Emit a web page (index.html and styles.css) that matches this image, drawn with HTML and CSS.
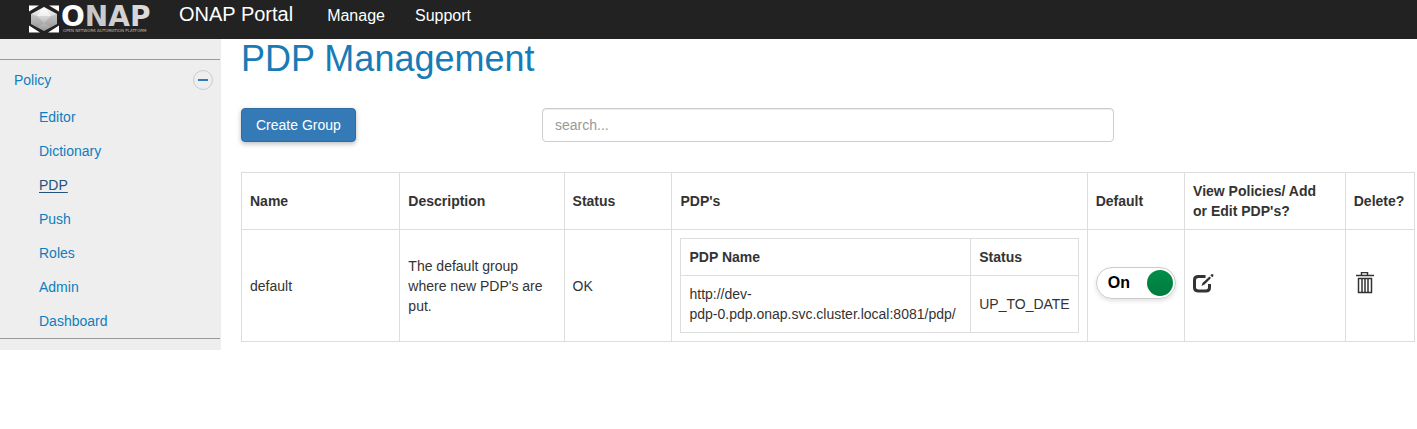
FILE: index.html
```html
<!DOCTYPE html>
<html lang="en">
<head>
<meta charset="utf-8">
<title>ONAP Portal</title>
<link rel="stylesheet" href="styles.css">
</head>
<body>
<header class="topbar">
  <svg class="logo" width="128" height="30" viewBox="0 0 128 30" role="img" aria-label="ONAP Open Network Automation Platform">
    <defs>
      <linearGradient id="hex" x1="0" y1="0" x2="0" y2="1">
        <stop offset="0" stop-color="#fff"/>
        <stop offset="1" stop-color="#999"/>
      </linearGradient>
      <linearGradient id="word" x1="0" y1="0" x2="1" y2="0">
        <stop offset="0" stop-color="#bbb"/>
        <stop offset="1" stop-color="#ddd"/>
      </linearGradient>
    </defs>
    <path fill="#fff" d="M1 1.500h10L1 7.500zM31 1.500v6l-10-6zM1 28.500v-7l11 7zM31 28.500v-7l-11 7z"/>
    <path fill="url(#hex)" d="M16 3L29 10v10l-13 7-13-7V10z"/>
    <path fill="#fff" opacity=".6" d="M16 3L23 12H9z"/>
    <path fill="#888" opacity=".3" d="M3 10l6 2-6 8zM29 10l-6 2 6 8zM9 12l7 7-7 4.500-6-3.500zM23 12l-7 7 7 4.500 6-3.500z"/>
    <text class="logo-word" x="33" y="22"><tspan fill="#fff">O</tspan><tspan fill="url(#word)">NAP</tspan></text>
    <text class="logo-sub" x="35" y="28">OPEN NETWORK AUTOMATION PLATFORM</text>
  </svg>
  <a class="brand" href="#">ONAP Portal</a>
  <nav class="topnav" aria-label="Main">
    <a href="#">Manage</a>
    <a href="#">Support</a>
  </nav>
</header>
<div class="layout">
  <aside class="sidebar">
    <nav class="menu" aria-label="Policy">
      <div class="menu-head">
        <a href="#">Policy</a>
        <button class="collapse" type="button" aria-label="Collapse Policy"></button>
      </div>
      <ul class="menu-list">
        <li><a href="#">Editor</a></li>
        <li><a href="#">Dictionary</a></li>
        <li><a class="active" href="#" aria-current="page">PDP</a></li>
        <li><a href="#">Push</a></li>
        <li><a href="#">Roles</a></li>
        <li><a href="#">Admin</a></li>
        <li><a href="#">Dashboard</a></li>
      </ul>
    </nav>
  </aside>
  <main class="content">
    <h1>PDP Management</h1>
    <div class="toolbar">
      <button class="create" type="button">Create Group</button>
      <input class="search" type="text" placeholder="search..." aria-label="Search">
    </div>
    <table class="grid groups">
      <colgroup>
        <col class="c-name"><col class="c-desc"><col class="c-status"><col class="c-pdps"><col class="c-default"><col class="c-view"><col class="c-delete">
      </colgroup>
      <thead>
        <tr><th>Name</th><th>Description</th><th>Status</th><th>PDP's</th><th>Default</th><th>View Policies/ Add<br>or Edit PDP's?</th><th>Delete?</th></tr>
      </thead>
      <tbody>
        <tr>
          <td>default</td>
          <td>The default group where new PDP's are put.</td>
          <td>OK</td>
          <td>
            <table class="grid">
              <thead><tr><th>PDP Name</th><th>Status</th></tr></thead>
              <tbody><tr><td>http://dev-<wbr><span class="host">pdp-0.pdp.onap.svc.cluster.local:8081/pdp/</span></td><td>UP_TO_DATE</td></tr></tbody>
            </table>
          </td>
          <td><label class="toggle"><span>On</span><input type="checkbox" checked></label></td>
          <td>
            <button class="icon" type="button" aria-label="Edit">
              <svg width="22" height="22" viewBox="0 0 22 22">
                <path d="M12.500 4.500H5.500Q1.500 4.500 1.500 8v7.500Q1.500 19 5.500 19H13q3.500 0 3.500-3.500V12" fill="none" stroke="#333" stroke-width="3"/>
                <path d="M8.500 14l1-3L16.500 4.500l1.500 1.500-6.500 6.500zM17.300 3.200L18.300 2.200h2v2L19.300 5.200z" fill="#333"/>
              </svg>
            </button>
          </td>
          <td>
            <button class="icon" type="button" aria-label="Delete">
              <svg width="22" height="22" viewBox="0 0 22 22">
                <path d="M2 3.500h18M7.500 3V.5h6V3M4 6.500h14M4.500 6v14.500h13V6M8 6.500v14M11 6.500v14M14 6.500v14" fill="none" stroke="#333" stroke-width="1.500"/>
              </svg>
            </button>
          </td>
        </tr>
      </tbody>
    </table>
  </main>
</div>
</body>
</html>
```
FILE: styles.css
```css
* { box-sizing: border-box; }
body {
  margin: 0;
  background: #fff;
  color: #333;
  font: 14px/20px "Liberation Sans", Arial, sans-serif;
}
a { color: #0e7dbd; text-decoration: none; }
button, input { font: inherit; margin: 0; }

.topbar {
  display: flex;
  align-items: flex-start;
  height: 39px;
  padding: 4px 28px;
  background: #222;
}
.topbar a { color: #fff; }
.logo { flex: none; margin-right: 23px; overflow: visible; }
.logo-word { font: bold 28px "DejaVu Sans", sans-serif; }
.logo-sub { font: 4px "DejaVu Sans", sans-serif; fill: #bbb; }
.brand { font-size: 20px; white-space: nowrap; }
.topnav { display: flex; gap: 30px; margin-left: 34px; padding-top: 2px; font-size: 16px; }

.layout { display: flex; align-items: flex-start; }
.sidebar {
  flex: 0 0 221px;
  padding: 20px 1px 11px 0;
  background: #eee;
}
.menu { border-top: 1px solid #999; border-bottom: 1px solid #999; }
.menu-head {
  display: flex;
  align-items: center;
  justify-content: space-between;
  height: 40px;
  padding: 0 7px 0 14px;
}
.collapse {
  display: grid;
  place-items: center;
  width: 20px;
  height: 20px;
  padding: 0;
  border: 1px solid #ccc;
  border-radius: 50%;
  background: none;
}
.collapse::before { content: ""; width: 10px; height: 2px; background: #337ab7; }
.menu-list { margin: 0; padding: 0 0 0 39px; list-style: none; }
.menu-list li { line-height: 34px; }
.menu-list .active { color: #23527c; text-decoration: underline; text-underline-offset: 2px; }

.content { flex: 1; min-width: 0; padding: 0 2px 0 20px; }
h1 {
  margin: 0 0 30px;
  color: #187bb5;
  font-size: 36px;
  font-weight: normal;
  line-height: 39px;
}
.toolbar {
  display: grid;
  grid-template-columns: 1fr 1.9fr 1fr;
  margin-bottom: 30px;
}
.create {
  justify-self: start;
  height: 34px;
  padding: 6px 14px;
  border: 1px solid #2e6da4;
  border-radius: 4px;
  background: #337ab7;
  box-shadow: 0 2px 5px rgba(0, 0, 0, .26);
  color: #fff;
}
.search {
  width: 100%;
  height: 34px;
  padding: 6px 12px;
  border: 1px solid #ccc;
  border-radius: 4px;
  box-shadow: inset 0 1px 1px rgba(0, 0, 0, .075);
}
.search::placeholder { color: #999; }

.grid { width: 100%; border-collapse: collapse; }
.grid th, .grid td { padding: 8px; border: 1px solid #ddd; text-align: left; vertical-align: middle; }
.groups { table-layout: fixed; }
.c-name { width: 13.5%; }
.c-desc { width: 14%; }
.c-status { width: 9.2%; }
.c-pdps { width: 35.4%; }
.c-default { width: 8.3%; }
.c-view { width: 13.7%; }
.c-delete { width: 5.9%; }
.host { white-space: nowrap; }

.toggle {
  display: flex;
  align-items: center;
  justify-content: space-between;
  height: 32px;
  margin-bottom: 6px;
  padding: 0 2px 0 11px;
  border: 1px solid #ccc;
  border-radius: 16px;
  box-shadow: 0 2px 4px rgba(0, 0, 0, .12);
  color: #000;
  font-size: 16px;
  font-weight: bold;
}
.toggle input {
  appearance: none;
  width: 26px;
  height: 26px;
  border-radius: 50%;
  background: linear-gradient(#008f48, #007a3e);
}
.icon { display: block; margin-bottom: 6px; padding: 0; border: 0; background: none; }
.icon svg { display: block; }
```
